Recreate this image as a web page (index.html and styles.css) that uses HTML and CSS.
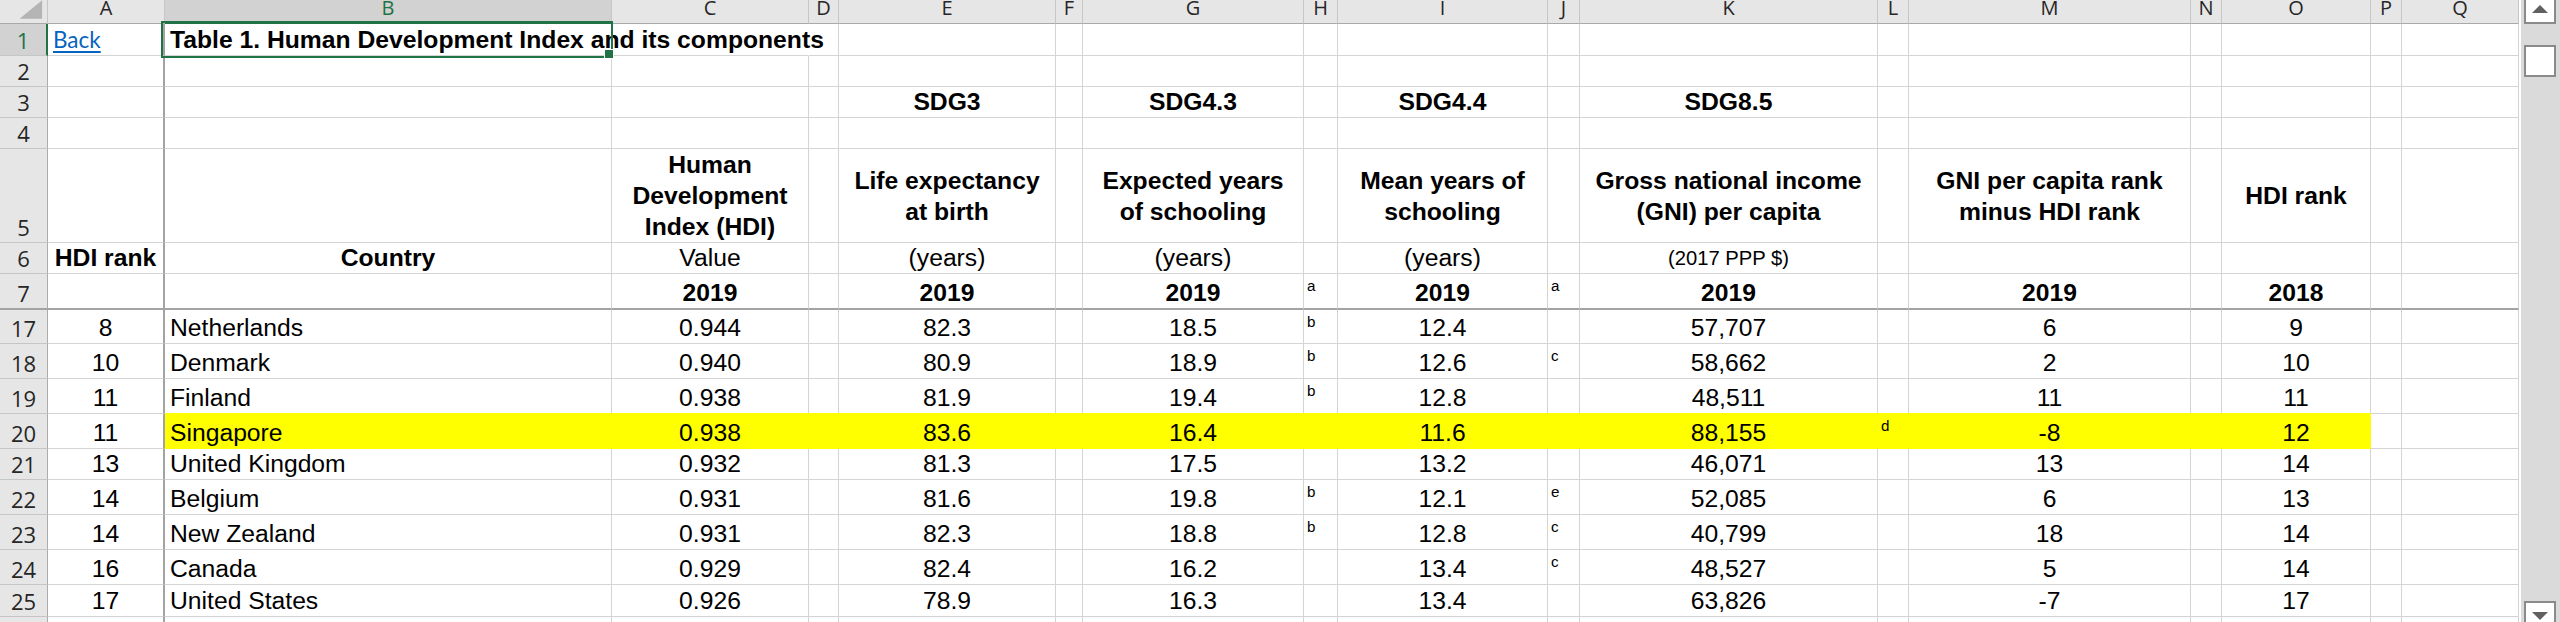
FILE: index.html
```html
<!DOCTYPE html>
<html lang="en">
<head>
<meta charset="utf-8">
<title>Table 1. Human Development Index and its components</title>
<link rel="stylesheet" href="styles.css">
</head>
<body>
<div class="app">
  <div class="sheet">
    <div class="row hdr">
      <div class="h corner"><svg class="tri" width="48" height="23" viewBox="0 0 48 23"><polygon points="20,19 43,19 43,0" fill="#b4b4b4"/></svg></div>
      <div class="h">A</div><div class="h sel">B</div><div class="h">C</div><div class="h">D</div><div class="h">E</div><div class="h">F</div><div class="h">G</div><div class="h">H</div><div class="h">I</div><div class="h">J</div><div class="h">K</div><div class="h">L</div><div class="h">M</div><div class="h">N</div><div class="h">O</div><div class="h">P</div><div class="h">Q</div>
    </div>

    <div class="row h32">
      <div class="rh sel">1</div>
      <div class="c fz"><a class="link" href="#">Back</a></div>
      <div class="c title bold">Table 1. Human Development Index and its components</div>
      <div class="c nogrid"></div><div class="c"></div><div class="c"></div><div class="c"></div><div class="c"></div><div class="c"></div><div class="c"></div><div class="c"></div><div class="c"></div><div class="c"></div><div class="c"></div><div class="c"></div><div class="c"></div><div class="c"></div><div class="c"></div>
    </div>

    <div class="row h31">
      <div class="rh">2</div>
      <div class="c fz"></div><div class="c"></div><div class="c"></div><div class="c"></div><div class="c"></div><div class="c"></div><div class="c"></div><div class="c"></div><div class="c"></div><div class="c"></div><div class="c"></div><div class="c"></div><div class="c"></div><div class="c"></div><div class="c"></div><div class="c"></div><div class="c"></div>
    </div>

    <div class="row h31">
      <div class="rh">3</div>
      <div class="c fz"></div><div class="c"></div><div class="c"></div><div class="c"></div>
      <div class="c n bold">SDG3</div><div class="c"></div>
      <div class="c n bold">SDG4.3</div><div class="c"></div>
      <div class="c n bold">SDG4.4</div><div class="c"></div>
      <div class="c n bold">SDG8.5</div><div class="c"></div>
      <div class="c"></div><div class="c"></div><div class="c"></div><div class="c"></div><div class="c"></div>
    </div>

    <div class="row h31">
      <div class="rh">4</div>
      <div class="c fz"></div><div class="c"></div><div class="c"></div><div class="c"></div><div class="c"></div><div class="c"></div><div class="c"></div><div class="c"></div><div class="c"></div><div class="c"></div><div class="c"></div><div class="c"></div><div class="c"></div><div class="c"></div><div class="c"></div><div class="c"></div><div class="c"></div>
    </div>

    <div class="row h94">
      <div class="rh">5</div>
      <div class="c fz"></div><div class="c"></div>
      <div class="c wrap">Human<br>Development<br>Index (HDI)</div><div class="c"></div>
      <div class="c wrap">Life expectancy<br>at birth</div><div class="c"></div>
      <div class="c wrap">Expected years<br>of schooling</div><div class="c"></div>
      <div class="c wrap">Mean years of<br>schooling</div><div class="c"></div>
      <div class="c wrap">Gross national income<br>(GNI) per capita</div><div class="c"></div>
      <div class="c wrap">GNI per capita rank<br>minus HDI rank</div><div class="c"></div>
      <div class="c wrap">HDI rank</div><div class="c"></div><div class="c"></div>
    </div>

    <div class="row h31">
      <div class="rh">6</div>
      <div class="c fz n bold">HDI rank</div>
      <div class="c n bold">Country</div>
      <div class="c n">Value</div><div class="c"></div>
      <div class="c n">(years)</div><div class="c"></div>
      <div class="c n">(years)</div><div class="c"></div>
      <div class="c n">(years)</div><div class="c"></div>
      <div class="c n sm">(2017 PPP $)</div><div class="c"></div>
      <div class="c"></div><div class="c"></div><div class="c"></div><div class="c"></div><div class="c"></div>
    </div>

    <div class="row h36 frz">
      <div class="rh">7</div>
      <div class="c fz"></div><div class="c"></div>
      <div class="c n bold">2019</div><div class="c"></div>
      <div class="c n bold">2019</div><div class="c"></div>
      <div class="c n bold">2019</div><div class="c fn">a</div>
      <div class="c n bold">2019</div><div class="c fn">a</div>
      <div class="c n bold">2019</div><div class="c"></div>
      <div class="c n bold">2019</div><div class="c"></div>
      <div class="c n bold">2018</div><div class="c"></div><div class="c"></div>
    </div>

    <div class="row h34">
      <div class="rh">17</div>
      <div class="c fz n">8</div><div class="c">Netherlands</div>
      <div class="c n">0.944</div><div class="c"></div>
      <div class="c n">82.3</div><div class="c"></div>
      <div class="c n">18.5</div><div class="c fn">b</div>
      <div class="c n">12.4</div><div class="c fn"></div>
      <div class="c n">57,707</div><div class="c fn"></div>
      <div class="c n">6</div><div class="c"></div>
      <div class="c n">9</div><div class="c"></div><div class="c"></div>
    </div>

    <div class="row h35">
      <div class="rh">18</div>
      <div class="c fz n">10</div><div class="c">Denmark</div>
      <div class="c n">0.940</div><div class="c"></div>
      <div class="c n">80.9</div><div class="c"></div>
      <div class="c n">18.9</div><div class="c fn">b</div>
      <div class="c n">12.6</div><div class="c fn">c</div>
      <div class="c n">58,662</div><div class="c fn"></div>
      <div class="c n">2</div><div class="c"></div>
      <div class="c n">10</div><div class="c"></div><div class="c"></div>
    </div>

    <div class="row h35">
      <div class="rh">19</div>
      <div class="c fz n">11</div><div class="c">Finland</div>
      <div class="c n">0.938</div><div class="c"></div>
      <div class="c n">81.9</div><div class="c"></div>
      <div class="c n">19.4</div><div class="c fn">b</div>
      <div class="c n">12.8</div><div class="c fn"></div>
      <div class="c n">48,511</div><div class="c fn"></div>
      <div class="c n">11</div><div class="c"></div>
      <div class="c n">11</div><div class="c"></div><div class="c"></div>
    </div>

    <div class="row h35">
      <div class="rh">20</div>
      <div class="c fz n">11</div><div class="c hl">Singapore</div>
      <div class="c n hl">0.938</div><div class="c hl"></div>
      <div class="c n hl">83.6</div><div class="c hl"></div>
      <div class="c n hl">16.4</div><div class="c fn hl"></div>
      <div class="c n hl">11.6</div><div class="c fn hl"></div>
      <div class="c n hl">88,155</div><div class="c fn hl">d</div>
      <div class="c n hl">-8</div><div class="c hl"></div>
      <div class="c n hl">12</div><div class="c"></div><div class="c"></div>
    </div>

    <div class="row h31">
      <div class="rh">21</div>
      <div class="c fz n">13</div><div class="c">United Kingdom</div>
      <div class="c n">0.932</div><div class="c"></div>
      <div class="c n">81.3</div><div class="c"></div>
      <div class="c n">17.5</div><div class="c fn"></div>
      <div class="c n">13.2</div><div class="c fn"></div>
      <div class="c n">46,071</div><div class="c fn"></div>
      <div class="c n">13</div><div class="c"></div>
      <div class="c n">14</div><div class="c"></div><div class="c"></div>
    </div>

    <div class="row h35">
      <div class="rh">22</div>
      <div class="c fz n">14</div><div class="c">Belgium</div>
      <div class="c n">0.931</div><div class="c"></div>
      <div class="c n">81.6</div><div class="c"></div>
      <div class="c n">19.8</div><div class="c fn">b</div>
      <div class="c n">12.1</div><div class="c fn">e</div>
      <div class="c n">52,085</div><div class="c fn"></div>
      <div class="c n">6</div><div class="c"></div>
      <div class="c n">13</div><div class="c"></div><div class="c"></div>
    </div>

    <div class="row h35">
      <div class="rh">23</div>
      <div class="c fz n">14</div><div class="c">New Zealand</div>
      <div class="c n">0.931</div><div class="c"></div>
      <div class="c n">82.3</div><div class="c"></div>
      <div class="c n">18.8</div><div class="c fn">b</div>
      <div class="c n">12.8</div><div class="c fn">c</div>
      <div class="c n">40,799</div><div class="c fn"></div>
      <div class="c n">18</div><div class="c"></div>
      <div class="c n">14</div><div class="c"></div><div class="c"></div>
    </div>

    <div class="row h35">
      <div class="rh">24</div>
      <div class="c fz n">16</div><div class="c">Canada</div>
      <div class="c n">0.929</div><div class="c"></div>
      <div class="c n">82.4</div><div class="c"></div>
      <div class="c n">16.2</div><div class="c fn"></div>
      <div class="c n">13.4</div><div class="c fn">c</div>
      <div class="c n">48,527</div><div class="c fn"></div>
      <div class="c n">5</div><div class="c"></div>
      <div class="c n">14</div><div class="c"></div><div class="c"></div>
    </div>

    <div class="row h32">
      <div class="rh">25</div>
      <div class="c fz n">17</div><div class="c">United States</div>
      <div class="c n">0.926</div><div class="c"></div>
      <div class="c n">78.9</div><div class="c"></div>
      <div class="c n">16.3</div><div class="c fn"></div>
      <div class="c n">13.4</div><div class="c fn"></div>
      <div class="c n">63,826</div><div class="c fn"></div>
      <div class="c n">-7</div><div class="c"></div>
      <div class="c n">17</div><div class="c"></div><div class="c"></div>
    </div>

    <div class="row h40">
      <div class="rh">26</div>
      <div class="c fz"></div><div class="c"></div><div class="c"></div><div class="c"></div><div class="c"></div><div class="c"></div><div class="c"></div><div class="c"></div><div class="c"></div><div class="c"></div><div class="c"></div><div class="c"></div><div class="c"></div><div class="c"></div><div class="c"></div><div class="c"></div><div class="c"></div>
    </div>
  </div>

  <div class="vscroll">
    <div class="sbtn up"><svg width="16" height="8" viewBox="0 0 16 8"><polygon points="0,8 8,0 16,8" fill="#606060"/></svg></div>
    <div class="thumb"></div>
    <div class="sbtn down"><svg width="16" height="8" viewBox="0 0 16 8"><polygon points="0,0 16,0 8,8" fill="#606060"/></svg></div>
  </div>
</div>
</body>
</html>
```
FILE: styles.css
```css
* { box-sizing: border-box; margin: 0; padding: 0; }

html, body {
  width: 2560px;
  height: 622px;
  overflow: hidden;
  background: #ffffff;
}

body {
  font-family: "Liberation Sans", Arial, sans-serif;
  color: #000000;
}

.app {
  display: flex;
  height: 622px;
  overflow: hidden;
}

.sheet {
  width: 2519px;
  flex: none;
}

.row {
  display: grid;
  grid-template-columns: 48px 117px 447px 197px 30px 217px 27px 221px 34px 210px 32px 298px 31px 282px 31px 149px 31px 117px;
}

.hdr { height: 24px; }
.h31 { height: 31px; }
.h32 { height: 32px; }
.h34 { height: 34px; }
.h35 { height: 35px; }
.h36 { height: 36px; }
.h40 { height: 40px; }
.h94 { height: 94px; }

/* column headers */
.h {
  background: #e6e6e6;
  border-right: 1px solid #c6c6c6;
  border-bottom: 1px solid #a9a9a9;
  font-family: "Open Sans", "Noto Sans", sans-serif;
  font-size: 20px;
  line-height: 14px;
  color: #262626;
  display: flex;
  align-items: flex-start;
  justify-content: center;
  padding-top: 1px;
  overflow: hidden;
}

.h.sel {
  background: #d2d2d2;
  color: #217346;
  border-bottom: 2px solid #217346;
}

.corner {
  position: relative;
  padding: 0;
  justify-content: flex-start;
}

.tri { display: block; }

/* row headers */
.rh {
  background: #e6e6e6;
  border-right: 1px solid #ababab;
  border-bottom: 1px solid #c6c6c6;
  font-family: "Open Sans", "Noto Sans", sans-serif;
  font-size: 22px;
  line-height: 30px;
  color: #262626;
  display: flex;
  align-items: flex-end;
  justify-content: center;
  padding-bottom: 0.5px;
  overflow: hidden;
}

.rh.sel {
  background: #d2d2d2;
  color: #217346;
  border-right: 2px solid #217346;
}

/* cells */
.c {
  border-right: 1px solid #d4d4d4;
  border-bottom: 1px solid #d4d4d4;
  display: flex;
  align-items: flex-end;
  padding: 0 4px 1.5px 5px;
  font-size: 24.7px;
  line-height: 28px;
  white-space: nowrap;
  overflow: hidden;
}

.n { justify-content: center; padding-left: 4px; }
.bold { font-weight: bold; }
.sm { font-size: 20.2px; }

.fn {
  align-items: flex-start;
  font-size: 15.2px;
  line-height: 17px;
  padding: 2.5px 0 0 3px;
}

.wrap {
  align-items: center;
  justify-content: center;
  text-align: center;
  white-space: normal;
  line-height: 31px;
  font-weight: bold;
  padding: 0;
}

.fz { border-right: 2px solid #a3a3a3; }

.frz .c,
.frz .rh { border-bottom: 2px solid #a3a3a3; }

.hl {
  background: #ffff00;
  border-right-color: #ffff00;
  border-bottom-color: #ffff00;
  box-shadow: 0 -1px 0 #ffff00;
}

.nogrid { border-right-color: transparent; }

.link {
  color: #0563c1;
  text-decoration: underline;
  text-decoration-thickness: 2px;
  text-underline-offset: 3px;
  font-family: Lato, "Open Sans", sans-serif;
  font-size: 22.5px;
}

.title {
  position: relative;
  overflow: visible;
}

.title::after {
  content: "";
  position: absolute;
  top: -3px;
  left: -4px;
  right: -2px;
  bottom: -3px;
  border: 2px solid #217346;
}

.title::before {
  content: "";
  position: absolute;
  right: -3px;
  bottom: -4px;
  width: 8px;
  height: 8px;
  background: #217346;
  border: 1px solid #ffffff;
  z-index: 1;
}

/* vertical scrollbar */
.vscroll {
  width: 41px;
  flex: none;
  height: 622px;
  background: #dadada;
  border-left: 2px solid #ffffff;
  padding: 0 4px 0 3px;
  display: flex;
  flex-direction: column;
}

.sbtn {
  height: 30px;
  background: #ffffff;
  border: 2px solid #8a8a8a;
  display: flex;
  align-items: center;
  justify-content: center;
  flex: none;
}

.sbtn svg { display: block; }

.up { margin-top: -6px; }

.thumb {
  margin-top: 21px;
  height: 32px;
  flex: none;
  background: #ffffff;
  border: 2px solid #8a8a8a;
}

.down {
  margin-top: auto;
  margin-bottom: -9px;
}
```
